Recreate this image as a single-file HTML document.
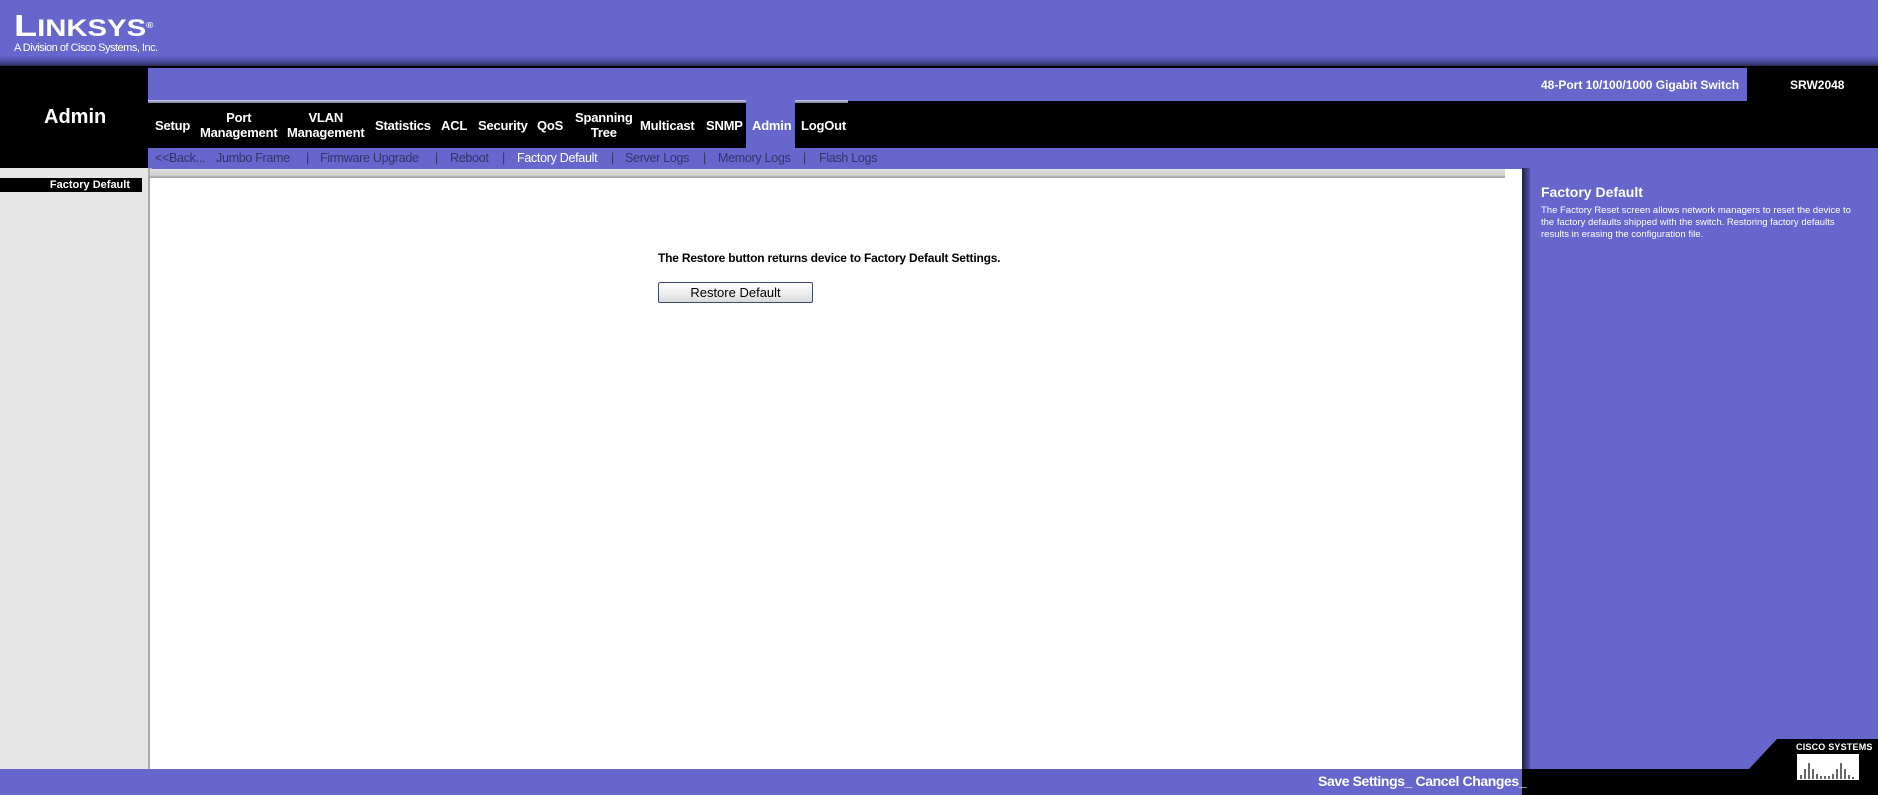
<!DOCTYPE html>
<html><head><meta charset="utf-8"><style>
*{margin:0;padding:0;box-sizing:border-box}
body{width:1878px;height:795px;overflow:hidden;background:#6666cc;font-family:"Liberation Sans",Arial,sans-serif;position:relative}
.a{position:absolute}
.nav{color:#fff;font-weight:bold;font-size:13px;text-align:center;line-height:15px;letter-spacing:-0.2px}
.sub{color:#33336a;font-size:12.5px;top:151px;letter-spacing:-0.3px}
</style></head><body>
<div class="a" style="left:0;top:0;width:1878px;height:66px;background:#6666cc"></div>
<div class="a" style="left:0;top:56px;width:1878px;height:10px;background:linear-gradient(#6666cc,#4a4a99 60%,#2a2a55)"></div>
<div class="a" style="left:14px;top:11px;color:#fff;font-weight:bold;font-size:31px;line-height:30px;transform:scaleX(1.22);transform-origin:left">L<span style="font-size:24px">INKSYS</span><sup style="font-size:8px;vertical-align:top">®</sup></div>
<div class="a" style="left:14px;top:42px;color:#fff;font-size:11px;line-height:12px;letter-spacing:-0.5px">A Division of Cisco Systems, Inc.</div>

<div class="a" style="left:0;top:66px;width:1878px;height:102px;background:#000"></div>
<div class="a" style="left:148px;top:68px;width:1599px;height:33px;background:#6666cc"></div>
<div class="a" style="left:148px;top:100px;width:598px;height:3px;background:linear-gradient(#ccccee,#777799)"></div>
<div class="a" style="left:795px;top:100px;width:53px;height:3px;background:linear-gradient(#ccccee,#777799)"></div>
<div class="a" style="left:746px;top:100px;width:49px;height:48px;background:#6666cc"></div>
<div class="a" style="left:148px;top:148px;width:1730px;height:20px;background:#6666cc"></div>
<div class="a" style="left:1541px;top:78px;color:#fff;font-weight:bold;font-size:12px">48-Port 10/100/1000 Gigabit Switch</div>
<div class="a" style="left:1790px;top:78px;color:#fff;font-weight:bold;font-size:12px">SRW2048</div>
<div class="a" style="left:44px;top:106px;color:#fff;font-weight:bold;font-size:20px">Admin</div>

<div class="a nav" style="left:155px;top:118px">Setup</div>
<div class="a nav" style="left:200px;top:110px">Port<br>Management</div>
<div class="a nav" style="left:287px;top:110px">VLAN<br>Management</div>
<div class="a nav" style="left:375px;top:118px">Statistics</div>
<div class="a nav" style="left:441px;top:118px">ACL</div>
<div class="a nav" style="left:478px;top:118px">Security</div>
<div class="a nav" style="left:537px;top:118px">QoS</div>
<div class="a nav" style="left:575px;top:110px">Spanning<br>Tree</div>
<div class="a nav" style="left:640px;top:118px">Multicast</div>
<div class="a nav" style="left:706px;top:118px">SNMP</div>
<div class="a nav" style="left:752px;top:118px">Admin</div>
<div class="a nav" style="left:801px;top:118px">LogOut</div>

<div class="a sub" style="left:155px">&lt;&lt;Back...</div>
<div class="a sub" style="left:216px">Jumbo Frame</div>
<div class="a sub" style="left:306px">|</div>
<div class="a sub" style="left:320px">Firmware Upgrade</div>
<div class="a sub" style="left:435px">|</div>
<div class="a sub" style="left:450px">Reboot</div>
<div class="a sub" style="left:502px">|</div>
<div class="a sub" style="left:517px;color:#fff">Factory Default</div>
<div class="a sub" style="left:611px">|</div>
<div class="a sub" style="left:625px">Server Logs</div>
<div class="a sub" style="left:703px">|</div>
<div class="a sub" style="left:718px">Memory Logs</div>
<div class="a sub" style="left:803px">|</div>
<div class="a sub" style="left:819px">Flash Logs</div>

<div class="a" style="left:0;top:168px;width:148px;height:601px;background:#e6e6e6"></div>
<div class="a" style="left:0;top:178px;width:142px;height:14px;background:#000;color:#fff;font-weight:bold;font-size:11px;text-align:right;padding-right:12px;line-height:14px">Factory Default</div>
<div class="a" style="left:148px;top:168px;width:4px;height:601px;background:#aaa"></div>
<div class="a" style="left:150px;top:169px;width:1372px;height:600px;background:#fff"></div>
<div class="a" style="left:150px;top:169px;width:1355px;height:9px;background:linear-gradient(#e0e0e0,#d0d0d0 70%,#999)"></div>
<div class="a" style="left:1522px;top:168px;width:8px;height:601px;background:linear-gradient(90deg,#222244,#3a3a80,#5555aa)"></div>

<div class="a" style="left:658px;top:251px;font-weight:bold;font-size:12px;color:#000;letter-spacing:-0.2px">The Restore button returns device to Factory Default Settings.</div>
<div class="a" style="left:658px;top:282px;width:155px;height:21px;border:1px solid #3a4a7a;border-radius:2px;background:linear-gradient(#fff,#ececec 60%,#d8d8d8);font-size:13px;text-align:center;line-height:19px;color:#000">Restore Default</div>

<div class="a" style="left:1541px;top:184px;color:#fff;font-weight:bold;font-size:14px">Factory Default</div>
<div class="a" style="left:1541px;top:205px;color:#fff;font-size:9.5px;line-height:12px;width:320px">The Factory Reset screen allows network managers to reset the device to the factory defaults shipped with the switch. Restoring factory defaults results in erasing the configuration file.</div>

<div class="a" style="left:0;top:769px;width:1522px;height:26px;background:#6666cc"></div>
<div class="a" style="left:1522px;top:769px;width:356px;height:26px;background:#000"></div>
<svg class="a" style="left:1740px;top:739px" width="138" height="31"><polygon points="8,31 37,0 138,0 138,31" fill="#000"/></svg>
<div class="a" style="left:1318px;top:773px;color:#fff;font-weight:bold;font-size:14px;letter-spacing:-0.4px;white-space:nowrap">Save Settings_ Cancel Changes_</div>
<div class="a" style="left:1796px;top:742px;color:#fff;font-weight:bold;font-size:9px;letter-spacing:0.2px">CISCO SYSTEMS</div>
<svg class="a" style="left:1797px;top:754px" width="64" height="28"><rect width="62" height="26" fill="#fff"/><g stroke="#000" stroke-width="1.2">
<line x1="4" y1="25" x2="4" y2="21"/><line x1="8" y1="25" x2="8" y2="15"/><line x1="12" y1="25" x2="12" y2="9"/><line x1="16" y1="25" x2="16" y2="15"/><line x1="20" y1="25" x2="20" y2="20"/><line x1="24" y1="25" x2="24" y2="22"/><line x1="28" y1="25" x2="28" y2="22"/><line x1="32" y1="25" x2="32" y2="22"/><line x1="36" y1="25" x2="36" y2="20"/><line x1="40" y1="25" x2="40" y2="15"/><line x1="44" y1="25" x2="44" y2="9"/><line x1="48" y1="25" x2="48" y2="15"/><line x1="52" y1="25" x2="52" y2="21"/><line x1="56" y1="25" x2="56" y2="23"/></g></svg>
</body></html>
